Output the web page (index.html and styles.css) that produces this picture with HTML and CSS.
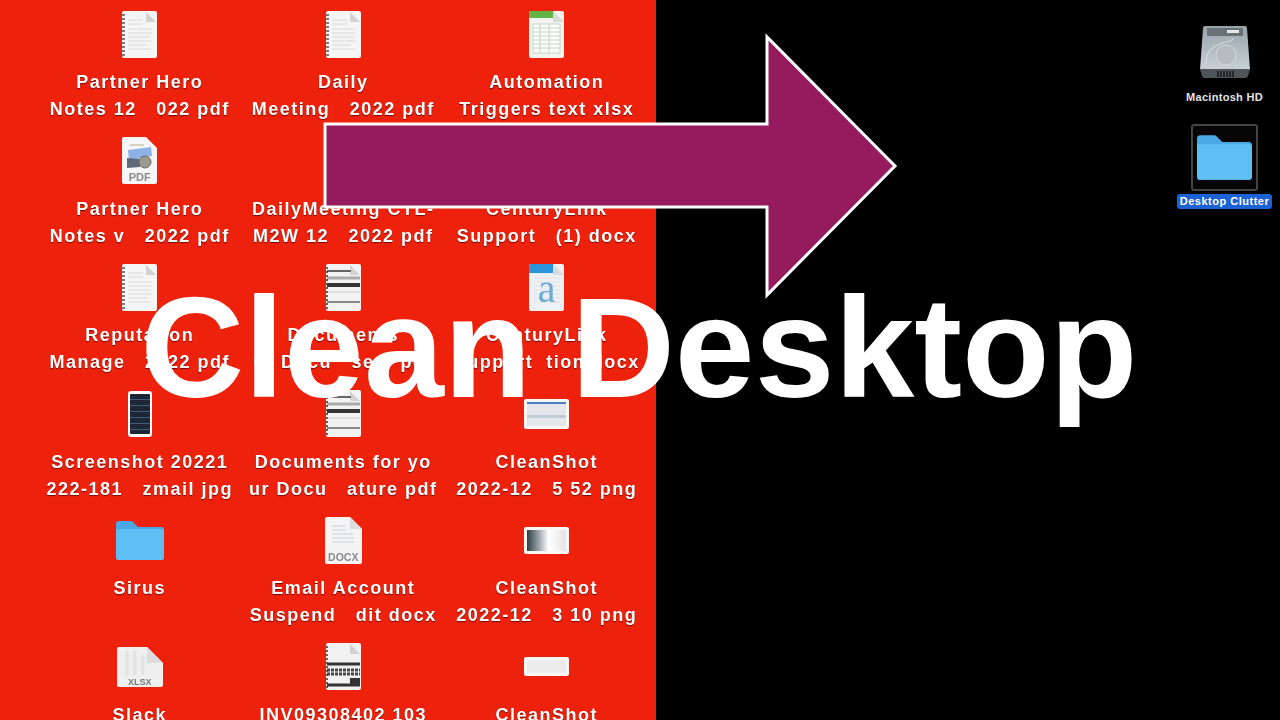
FILE: index.html
```html
<!DOCTYPE html>
<html lang="en">
<head>
    <meta charset="UTF-8">
    <title>Clean Desktop</title>
    <link rel="stylesheet" href="styles.css">
</head>
<body>
    <svg class="defs" width="0" height="0">
        <defs>
            <symbol id="notes" viewBox="0 0 35 47">
                <rect width="35" height="47" rx="2" fill="#f5f5f5"/>
                <path d="M24 1l10 10H24z" fill="#d2d2d2"/>
                <path d="M6 9h15M6 13h15M6 18h24M6 22h24M6 26h22M6 30h24M6 34h19M6 38h23" stroke="#d8d8d8" stroke-width="1"/>
                <path d="M0 4h3M0 8h3M0 12h3M0 16h3M0 20h3M0 24h3M0 28h3M0 32h3M0 36h3M0 40h3M0 44h3" stroke="#555" stroke-width="1.500"/>
            </symbol>
            <symbol id="scan" viewBox="0 0 35 47">
                <rect width="35" height="47" rx="2" fill="#f2f2f2"/>
                <path d="M24 1l10 10H24z" fill="#d2d2d2"/>
                <path d="M1 7h24" stroke="#666" stroke-width="2"/>
                <path d="M1 14h33" stroke="#aaa" stroke-width="3"/>
                <path d="M1 21h33" stroke="#333" stroke-width="4"/>
                <path d="M1 28h33" stroke="#ccc" stroke-width="1"/>
                <path d="M1 38h33" stroke="#888" stroke-width="2"/>
                <path d="M1 3v42" stroke="#333" stroke-width="1.500" stroke-dasharray="2 2"/>
            </symbol>
            <symbol id="invoice" viewBox="0 0 35 47">
                <rect width="35" height="47" rx="2" fill="#f2f2f2"/>
                <path d="M24 1l10 10H24z" fill="#d2d2d2"/>
                <path d="M1 3v42" stroke="#333" stroke-width="1.500" stroke-dasharray="2 2"/>
                <path d="M1 21h33" stroke="#333" stroke-width="3"/>
                <path d="M1 27h33M1 31h33" stroke="#444" stroke-width="3" stroke-dasharray="3 1"/>
                <path d="M1 42h33" stroke="#333" stroke-width="3"/>
                <rect x="24" y="35" width="10" height="8" fill="#333"/>
            </symbol>
            <symbol id="sheet" viewBox="0 0 35 47">
                <rect width="35" height="47" rx="2" fill="#f1f4f1"/>
                <path d="M2 0h22l5 7H0V2a2 2 0 0 1 2-2z" fill="#62b545"/>
                <path d="M24 0l11 11H24z" fill="#d5dbd5"/>
                <path d="M4 13h27v29H4z" fill="#fafcfa" stroke="#c6d6c6"/>
                <path d="M4 17h27M4 21h27M4 25h27M4 29h27M4 33h27M4 37h27M11 13v29M20 13v29" stroke="#c6d6c6"/>
            </symbol>
            <symbol id="word" viewBox="0 0 35 47">
                <rect width="35" height="47" rx="2" fill="#eef1f4"/>
                <path d="M2 0h22l5 9H0V2a2 2 0 0 1 2-2z" fill="#2b95d9"/>
                <path d="M24 0l11 11H24z" fill="#d6dbdf"/>
                <path d="M5 14h26M5 18h26M5 22h26M5 26h26M5 30h26M5 34h26M5 38h26" stroke="#dbe2e8"/>
            </symbol>
            <symbol id="pdf" viewBox="0 0 35 47">
                <path d="M2 0h22l11 11v34a2 2 0 0 1-2 2H2a2 2 0 0 1-2-2V2a2 2 0 0 1 2-2z" fill="#f6f6f6"/>
                <path d="M6 13l23-3 1 9-23 4z" fill="#8fb2e6"/>
                <path d="M5 21l15 1-2 8-13 1z" fill="#5f6a78"/>
                <circle cx="23" cy="25" r="6" fill="#9a9a8f" stroke="#666"/>
                <path d="M8 8h14" stroke="#d8cfc0" stroke-width="2"/>
            </symbol>
            <symbol id="docx" viewBox="0 0 37 47">
                <path d="M2 0h23l12 12v33a2 2 0 0 1-2 2H2a2 2 0 0 1-2-2V2a2 2 0 0 1 2-2z" fill="#f4f4f4"/>
                <path d="M25 0l12 12H25z" fill="#dcdcdc"/>
                <path d="M7 9h14M7 13h14M7 17h22M7 21h22M7 25h22" stroke="#dfe2e8" stroke-width="2"/>
            </symbol>
            <symbol id="xlsx" viewBox="0 0 46 40">
                <path d="M2 0h28l16 16v22a2 2 0 0 1-2 2H2a2 2 0 0 1-2-2V2a2 2 0 0 1 2-2z" fill="#efefef"/>
                <path d="M30 0l16 16H30z" fill="#dcdcdc"/>
                <path d="M10 4v24M18 4v24M26 8v20" stroke="#e2e2e2" stroke-width="3"/>
            </symbol>
            <symbol id="folder" viewBox="0 0 48 39">
                <path d="M3 0h12a3 3 0 0 1 2 1l5 5h23a3 3 0 0 1 3 3v27a3 3 0 0 1-3 3H3a3 3 0 0 1-3-3V3a3 3 0 0 1 3-3z" fill="#4aa8e4"/>
                <path d="M2 8h44a2 2 0 0 1 2 2v26a3 3 0 0 1-3 3H3a3 3 0 0 1-3-3V10a2 2 0 0 1 2-2z" fill="#5fbff5"/>
            </symbol>
        </defs>
    </svg>

    <div class="desktop">
        <section class="clutter">
            <div class="file"><div class="file-icon"><svg class="page"><use href="#notes"/></svg></div><p class="label">Partner Hero
Notes 12   022 pdf</p></div>
            <div class="file"><div class="file-icon"><svg class="page"><use href="#notes"/></svg></div><p class="label">Daily
Meeting   2022 pdf</p></div>
            <div class="file"><div class="file-icon"><svg class="page"><use href="#sheet"/></svg></div><p class="label">Automation
Triggers text xlsx</p></div>

            <div class="file"><div class="file-icon"><svg class="page"><use href="#pdf"/></svg><span class="tag tag-pdf">PDF</span></div><p class="label">Partner Hero
Notes v   2022 pdf</p></div>
            <div class="file"><div class="file-icon"></div><p class="label">DailyMeeting CTL-
M2W 12   2022 pdf</p></div>
            <div class="file"><div class="file-icon"></div><p class="label">CenturyLink
Support   (1) docx</p></div>

            <div class="file"><div class="file-icon"><svg class="page"><use href="#notes"/></svg></div><p class="label">Reputation
Manage   2022 pdf</p></div>
            <div class="file"><div class="file-icon"><svg class="page"><use href="#scan"/></svg></div><p class="label">Documents
ur Docu   se    pdf</p></div>
            <div class="file"><div class="file-icon"><svg class="page"><use href="#word"/></svg><span class="tag tag-word">a</span></div><p class="label">CenturyLink
Support  tion docx</p></div>

            <div class="file"><div class="file-icon"><div class="phone"><span class="phone-screen"></span></div></div><p class="label">Screenshot 20221
222-181   zmail jpg</p></div>
            <div class="file"><div class="file-icon"><svg class="page"><use href="#scan"/></svg></div><p class="label">Documents for yo
ur Docu   ature pdf</p></div>
            <div class="file"><div class="file-icon"><div class="shot shot-window"><span></span></div></div><p class="label">CleanShot
2022-12   5 52 png</p></div>

            <div class="file"><div class="file-icon"><svg class="folder"><use href="#folder"/></svg></div><p class="label">Sirus</p></div>
            <div class="file"><div class="file-icon"><svg class="page page-wide"><use href="#docx"/></svg><span class="tag tag-docx">DOCX</span></div><p class="label">Email Account
Suspend   dit docx</p></div>
            <div class="file"><div class="file-icon"><div class="shot shot-fade"><span></span></div></div><p class="label">CleanShot
2022-12   3 10 png</p></div>

            <div class="file"><div class="file-icon"><svg class="xlsx"><use href="#xlsx"/></svg><span class="tag tag-xlsx">XLSX</span></div><p class="label">Slack</p></div>
            <div class="file"><div class="file-icon"><svg class="page"><use href="#invoice"/></svg></div><p class="label">INV09308402 103</p></div>
            <div class="file"><div class="file-icon"><div class="shot shot-thin"><span></span></div></div><p class="label">CleanShot</p></div>
        </section>

        <section class="clean">
            <div class="drive">
                <svg class="drive-icon" viewBox="0 0 50 52">
                    <defs>
                        <linearGradient id="metal" x1="0" y1="0" x2="0" y2="1">
                            <stop offset="0" stop-color="#98a4aa"/>
                            <stop offset="1" stop-color="#c8d1d5"/>
                        </linearGradient>
                    </defs>
                    <path d="M5 0h40a2 2 0 0 1 2 2l3 42H0L3 2a2 2 0 0 1 2-2z" fill="url(#metal)"/>
                    <rect x="7" y="2" width="36" height="8" rx="1" fill="#6a7175"/>
                    <rect x="27" y="4" width="12" height="3" fill="#e6e9ea"/>
                    <circle cx="26" cy="29" r="10" fill="#b3bdc2" stroke="#d4dadd" stroke-width="1"/>
                    <path d="M6 38c0-15 8-17 14-20s12-2 14-6" fill="none" stroke="#dde2e4" stroke-width="1"/>
                    <path d="M0 43h50l-2 7a3 3 0 0 1-3 2H5a3 3 0 0 1-3-2z" fill="#4f5458"/>
                    <path d="M18 45v6M21 45v6M24 45v6M27 45v6M30 45v6M33 45v6" stroke="#17191b" stroke-width="1.500"/>
                </svg>
                <p class="drive-name">Macintosh HD</p>
            </div>
            <div class="picked">
                <div class="picked-box"><svg class="picked-folder"><use href="#folder"/></svg></div>
                <p class="picked-name">Desktop Clutter</p>
            </div>
        </section>
    </div>

    <svg class="arrow" viewBox="0 0 1280 720">
        <path d="M325 124H767V37L895 166 767 295V207H325z" fill="#961a5e" stroke="#fff" stroke-width="3"/>
    </svg>
    <h1 class="title">Clean Desktop</h1>
</body>
</html>
```

FILE: styles.css
```css
* { margin: 0; padding: 0; box-sizing: border-box; }
body { background: #000; width: 1280px; height: 720px; overflow: hidden; position: relative; font-family: "Liberation Sans", Arial, sans-serif; }
.defs { position: absolute; }

.desktop { display: flex; height: 720px; }

/* left half, the messy desktop */
.clutter { width: 656px; height: 720px; overflow: hidden; background: #ee220c; padding: 10px 0 0 38px; display: grid; grid-template-columns: repeat(3, 203.5px); grid-auto-rows: 126.6px; }
.file { display: flex; flex-direction: column; align-items: center; min-width: 0; }
.file-icon { height: 48px; width: 100%; margin-bottom: 11px; display: flex; align-items: center; justify-content: center; position: relative; filter: blur(0.5px); flex: none; }
.label { color: #fff; font-size: 18px; font-weight: 700; line-height: 27px; letter-spacing: 1.5px; text-align: center; white-space: pre; text-shadow: 0 1px 1px rgba(60,0,0,0.7); filter: blur(0.4px); }

.page { width: 35px; height: 47px; }
.page-wide { width: 37px; }
.folder { width: 48px; height: 39px; }
.xlsx { width: 46px; height: 40px; }

.tag { position: absolute; left: 0; right: 0; text-align: center; color: #8a8a8d; font-weight: 700; }
.tag-pdf { bottom: 2px; font-size: 11px; }
.tag-docx { bottom: 1px; font-size: 10.5px; }
.tag-xlsx { bottom: 4px; font-size: 9px; color: #777; }
.tag-word { bottom: 2px; font-family: "Liberation Serif", serif; font-size: 40px; line-height: 40px; font-weight: 400; color: #6aaad6; }

.phone { width: 24px; height: 46px; border-radius: 3px; background: #fff; padding: 3px 2px; }
.phone-screen { display: block; height: 100%; border-radius: 1px; background: repeating-linear-gradient(#1c2733 0 5px, #3d5c80 5px 6px); }

.shot { width: 45px; background: #f7f7f7; border-radius: 2px; padding: 3px; }
.shot span { display: block; height: 100%; }
.shot-window { height: 30px; }
.shot-window span { background: linear-gradient(#4a7fc0 0 2px, #e3e6ea 2px 13px, #c2ccd6 13px 16px, #e3e6ea 16px); }
.shot-fade { height: 27px; }
.shot-fade span { background: linear-gradient(90deg, #2f3f47, #9aa3a8 30%, #fff 55%, #e4e4e4); }
.shot-thin { height: 19px; }
.shot-thin span { background: #ececec; }

/* right half, the tidy one */
.clean { flex: 1; display: flex; flex-direction: column; align-items: flex-end; padding: 26px 8px 0 0; }
.drive { width: 95px; display: flex; flex-direction: column; align-items: center; }
.drive-icon { width: 50px; height: 52px; filter: blur(0.5px); }
.drive-name { color: #e4e4e4; font-size: 11px; font-weight: 700; line-height: 14px; margin-top: 12px; letter-spacing: 0.3px; white-space: nowrap; }
.picked { width: 95px; margin-top: 20px; display: flex; flex-direction: column; align-items: center; }
.picked-box { width: 67px; height: 67px; border: 2px solid #444; border-radius: 3px; background: #060606; display: flex; align-items: center; justify-content: center; }
.picked-folder { width: 55px; height: 47px; }
.picked-name { width: 95px; margin-top: 3px; background: #1a62d6; color: #fff; font-size: 11px; font-weight: 700; line-height: 15px; text-align: center; border-radius: 3px; letter-spacing: 0.5px; white-space: nowrap; }

/* overlays on top of both halves */
.arrow { position: absolute; left: 0; top: 0; width: 1280px; height: 720px; }
.title { position: absolute; left: 0; right: 2px; top: 265px; text-align: center; color: #fff; font-size: 143.5px; font-weight: 700; line-height: 165px; white-space: nowrap; }
```
